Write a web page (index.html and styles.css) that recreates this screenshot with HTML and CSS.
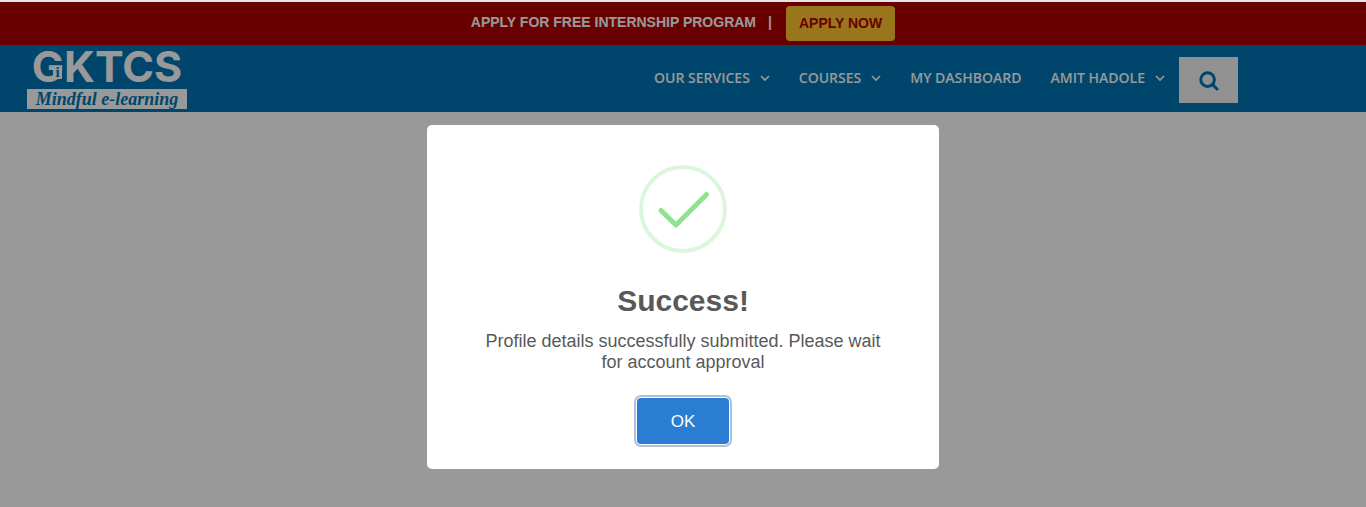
FILE: index.html
```html
<!DOCTYPE html>
<html lang="en">
<head>
    <meta charset="UTF-8">
    <meta name="viewport" content="width=device-width, initial-scale=1.0">
    <title>GKTCS</title>
    <link rel="stylesheet" href="styles.css">
</head>
<body>
    <div class="top-bar">
        <span class="top-text">APPLY FOR FREE INTERNSHIP PROGRAM</span>
        <span class="top-text">|</span>
        <a class="apply-btn" href="#">APPLY NOW</a>
    </div>
    <header class="header">
        <a class="logo" href="#">
            <span class="logo-name">GKTCS<span class="logo-i">i</span></span>
            <span class="logo-tagline">Mindful e-learning</span>
        </a>
        <nav class="nav">
            <a href="#">OUR SERVICES
                <svg class="caret" viewBox="0 0 10 10"><path d="M1 3 5 7 9 3"/></svg>
            </a>
            <a href="#">COURSES
                <svg class="caret" viewBox="0 0 10 10"><path d="M1 3 5 7 9 3"/></svg>
            </a>
            <a href="#">MY DASHBOARD</a>
            <a href="#">AMIT HADOLE
                <svg class="caret" viewBox="0 0 10 10"><path d="M1 3 5 7 9 3"/></svg>
            </a>
        </nav>
        <button class="search-btn" type="button" aria-label="Search">
            <svg viewBox="0 0 20 20"><circle cx="8.6" cy="8.6" r="6.8"/><path d="M13.6 13.6 18 18"/></svg>
        </button>
    </header>

    <div class="overlay">
        <div class="modal" role="dialog" aria-labelledby="modal-title" aria-describedby="modal-text">
            <svg class="modal-icon" viewBox="0 0 88 88">
                <circle cx="44" cy="44" r="42"/>
                <path d="M22 45.5 37 60 67.5 29.5"/>
            </svg>
            <h2 class="modal-title" id="modal-title">Success!</h2>
            <p class="modal-text" id="modal-text">Profile details successfully submitted. Please wait for account approval</p>
            <button class="modal-ok" type="button">OK</button>
        </div>
    </div>
</body>
</html>
```

FILE: styles.css
```css
* {
    margin: 0;
    padding: 0;
    box-sizing: border-box;
}
body {
    font-family: "Liberation Sans", Arial, sans-serif;
    background: #fff;
    border-top: 2px solid #e6e6e6;
    min-height: 100vh;
    overflow: hidden;
}
a {
    color: inherit;
    text-decoration: none;
}

/* top bar */
.top-bar {
    display: flex;
    justify-content: center;
    align-items: center;
    gap: 12px;
    height: 43px;
    padding-bottom: 1px;
    background: #af0000;
    color: #fff;
    font-size: 14px;
    font-weight: 700;
}
.top-text {
    padding-bottom: 2px;
}
.apply-btn {
    margin-left: 2px;
    padding: 0 13px;
    line-height: 35px;
    border-radius: 4px;
    background: #ffc52f;
    color: #af0000;
}

/* header */
.header {
    display: flex;
    align-items: center;
    height: 67px;
    padding: 0 128px 0 27px;
    background: #0075b4;
    color: #fff;
}
.logo {
    display: flex;
    flex-direction: column;
    gap: 6px;
    width: 160px;
    margin-right: auto;
    text-align: center;
}
.logo-name {
    position: relative;
    font-family: Inter, sans-serif;
    font-size: 43px;
    font-weight: 700;
    line-height: 34px;
}
.logo-i {
    position: absolute;
    left: 26px;
    top: 17px;
    width: 9px;
    background: #fff;
    color: #0075b4;
    font-family: "Liberation Serif", serif;
    font-size: 15px;
    line-height: 13px;
}
.logo-tagline {
    background: #fff;
    color: #0075b4;
    font-family: "Liberation Serif", serif;
    font-size: 18px;
    font-style: italic;
    font-weight: 700;
    line-height: 20px;
}
.nav {
    display: flex;
    gap: 29px;
    padding-bottom: 2px;
    font-family: "Open Sans", sans-serif;
    font-size: 14px;
    font-weight: 600;
}
.nav a {
    display: flex;
    align-items: center;
    gap: 10px;
}
.caret {
    width: 10px;
    height: 10px;
    fill: none;
    stroke: #fff;
    stroke-width: 1.6;
}
.search-btn {
    display: flex;
    justify-content: center;
    align-items: center;
    width: 59px;
    height: 46px;
    margin: 2px 0 0 14px;
    padding-top: 2px;
    border: none;
    background: #f2f2f2;
    cursor: pointer;
}
.search-btn svg {
    width: 20px;
    height: 20px;
    fill: none;
    stroke: #0075b4;
    stroke-width: 3;
    stroke-linecap: round;
}

/* modal */
.overlay {
    position: fixed;
    inset: 2px 0 0;
    display: flex;
    justify-content: center;
    align-items: flex-start;
    padding-top: 123px;
    background: rgba(0, 0, 0, 0.4);
}
.modal {
    display: flex;
    flex-direction: column;
    align-items: center;
    width: 512px;
    max-width: 100%;
    padding: 40px 48px 25px;
    border-radius: 5px;
    background: #fff;
    color: #595959;
    text-align: center;
}
.modal-icon {
    width: 88px;
    height: 88px;
    fill: none;
    stroke: #8ee48e;
    stroke-width: 5;
    stroke-linecap: round;
    stroke-linejoin: round;
}
.modal-icon circle {
    stroke: #dcf6dc;
    stroke-width: 4;
}
.modal-title {
    margin-top: 30px;
    font-size: 30px;
    line-height: 36px;
}
.modal-text {
    margin-top: 12px;
    font-size: 18px;
    line-height: 21px;
}
.modal-ok {
    margin-top: 25px;
    padding: 2px 34px 0;
    border: none;
    border-radius: 4px;
    background: #2b7cd3;
    box-shadow: 0 0 0 1px #fff, 0 0 0 3px rgba(50, 100, 150, 0.4);
    color: #fff;
    font-family: inherit;
    font-size: 17px;
    line-height: 44px;
    cursor: pointer;
}
```
